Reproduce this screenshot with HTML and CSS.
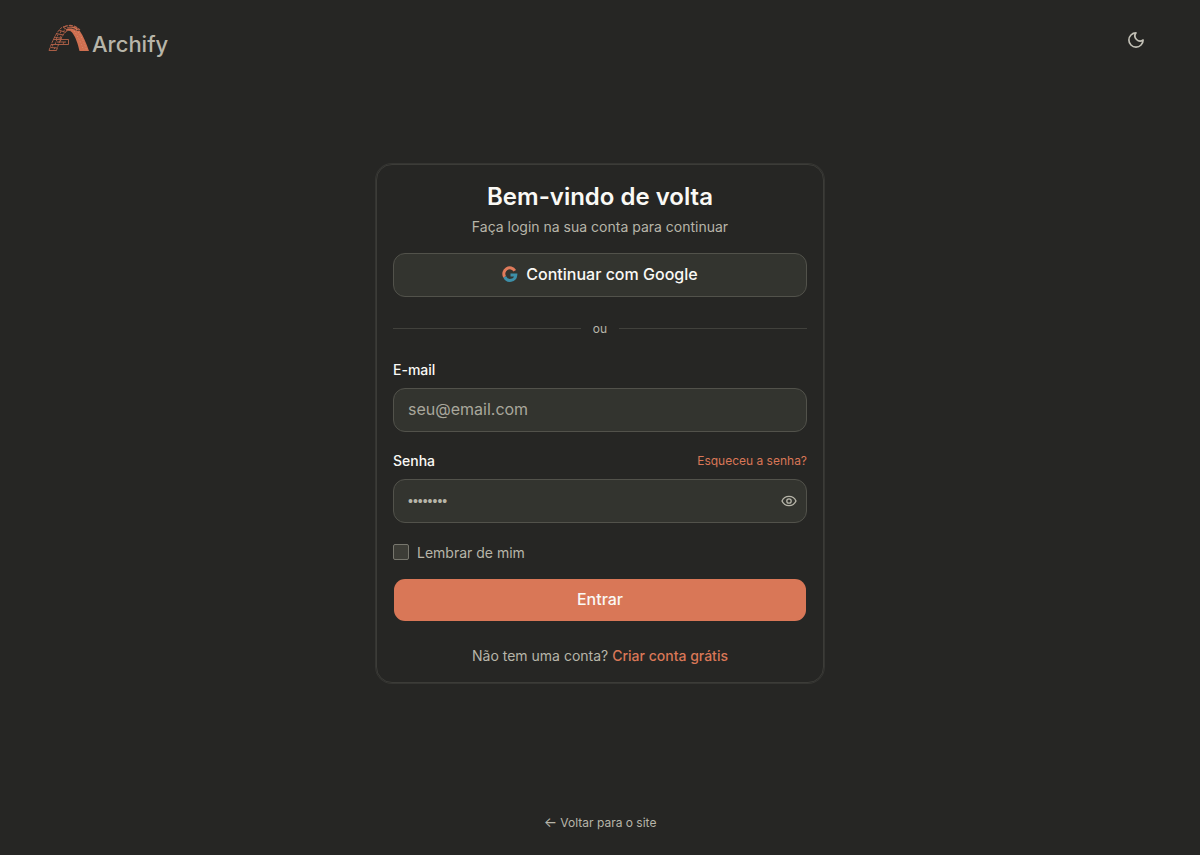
FILE: index.html
```html
<!DOCTYPE html>
<html lang="pt-BR">
<head>
    <meta charset="UTF-8">
    <meta name="viewport" content="width=device-width, initial-scale=1.0">
    <title>Entrar - Archify</title>
    <link rel="stylesheet" href="styles.css">
</head>
<body>
    <header class="topbar">
        <a class="logo" href="#">
            <svg class="logo-mark" viewBox="0 0 42 28" aria-hidden="true">
                <!-- right leg -->
                <path fill="#cf6f50" d="M19 3.500C24 1.500 29 3 31.500 6.500C35.500 12 38.500 20 41 27H31.500C30 20 27.500 13 24.500 9C23 7 21 6 18 7Z"/>
                <path fill="none" stroke="#262624" stroke-width=".8" d="M18 4.500C22 3.500 26 4 28.500 6.500L32 6"/>
                <!-- brick side -->
                <g fill="none" stroke="#b5634a" stroke-width=".9">
                    <path stroke-width="1.200" stroke-dasharray="4 1" d="M16 3C20 .8 25 1 28 3L32 6"/>
                    <path stroke-dasharray="3 1" d="M1 26.500C4 18 7.500 10 12 5C13 4 14.500 3 16 2.500M8.500 26.500C10.500 20 13 13.500 16 9.500C18 7 20.500 6 23 6.500"/>
                    <path d="M5 15.500H20.500V20.500H3M1 26.500H8.500M2.500 23.500L9.500 24M9 18H18M6 13L13.500 14.500M8 9.500L15.500 11M11 6L17.500 8.500M15 3L20 6.500"/>
                    <path stroke-dasharray="2 1" d="M5 20.500L4 23.500M7 23.500L5.500 26.500M9 15.500L7 20.500M13 15.500L12 18M16 18L15 20.500M10 10.500L8 15.500M12 14L13.500 10.500M13 7L12 10.500M15.500 8L17 4.500"/>
                </g>
                <g fill="none" stroke="#df957d" stroke-width=".7" stroke-dasharray="1 2">
                    <path d="M28 6C32 9 36 18 38.500 26M26 7C30 12 33.500 20 35.500 26"/>
                </g>
            </svg>
            <span class="logo-text">Archify</span>
        </a>
        <button class="theme-toggle" type="button" aria-label="Alternar tema">
            <svg viewBox="0 0 24 24" aria-hidden="true"><path d="M12 2.500a6.800 6.800 0 0 0 9.500 9.500A9.500 9.500 0 1 1 12 2.500Z"/></svg>
        </button>
    </header>

    <main class="content">
        <section class="card">
            <h1 class="title">Bem-vindo de volta</h1>
            <p class="subtitle">Faça login na sua conta para continuar</p>

            <button class="btn btn-google" type="button">
                <svg viewBox="0 0 16 16" aria-hidden="true">
                    <path fill="none" stroke="#e07b5b" stroke-width="3" d="M12.800 4.700A5.800 5.800 0 0 0 2.700 10.900"/>
                    <path fill="none" stroke="#3d8fa8" stroke-width="3" d="M2.700 10.900A5.800 5.800 0 0 0 13.800 9H8.500"/>
                </svg>
                Continuar com Google
            </button>

            <div class="divider">ou</div>

            <form class="form">
                <div class="field">
                    <label for="email">E-mail</label>
                    <input class="input" id="email" type="email" placeholder="seu@email.com">
                </div>
                <div class="field">
                    <div class="field-head">
                        <label for="password">Senha</label>
                        <a class="forgot" href="#">Esqueceu a senha?</a>
                    </div>
                    <div class="password">
                        <input class="input" id="password" type="password" placeholder="••••••••">
                        <button class="toggle-password" type="button" aria-label="Mostrar senha">
                            <svg viewBox="0 0 16 16" aria-hidden="true">
                                <path d="M1 8C3.800 1.900 12.200 1.900 15 8C12.200 14.100 3.800 14.100 1 8Z"/>
                                <circle cx="8" cy="8" r="2.200"/>
                            </svg>
                        </button>
                    </div>
                </div>
                <label class="remember"><input type="checkbox"> Lembrar de mim</label>
                <button class="btn btn-primary" type="submit">Entrar</button>
            </form>

            <p class="signup">Não tem uma conta? <a href="#">Criar conta grátis</a></p>
        </section>
    </main>

    <footer class="footer">
        <a href="#"><span class="arrow">←</span> Voltar para o site</a>
    </footer>
</body>
</html>
```
FILE: styles.css
```css
* {
    box-sizing: border-box;
}
body {
    display: flex;
    flex-direction: column;
    min-height: 100vh;
    margin: 0;
    background: #262624;
    color: #faf9f5;
    font-family: Inter, "Liberation Sans", sans-serif;
    font-size: 14px;
    line-height: 20px;
}
h1, p {
    margin: 0;
}
a {
    color: inherit;
    text-decoration: none;
}
button, input {
    font: inherit;
    color: inherit;
}
button {
    cursor: pointer;
}

/* Header */
.topbar {
    display: flex;
    align-items: center;
    justify-content: space-between;
    height: 80px;
    padding: 0 48px;
}
.logo {
    display: flex;
    align-items: flex-start;
    gap: 2px;
    color: #b7b5a9;
}
.logo-mark {
    width: 42px;
    height: 28px;
}
.logo-text {
    padding-top: 8px;
    font-size: 22px;
    font-weight: 500;
    line-height: 24px;
}
.theme-toggle {
    display: flex;
    align-items: center;
    justify-content: center;
    width: 32px;
    height: 32px;
    padding: 0;
    border: 0;
    background: none;
    color: #c2c0b6;
}
.theme-toggle svg {
    width: 18px;
    height: 18px;
    fill: none;
    stroke: currentColor;
    stroke-width: 2.2;
    stroke-linejoin: round;
}

/* Card */
.content {
    flex: 1;
    display: flex;
    align-items: center;
    justify-content: center;
    padding: 0 24px 24px;
}
.card {
    width: 100%;
    max-width: 448px;
    padding: 16px;
    border: 1px solid #3c3c38;
    border-radius: 16px;
    box-shadow: 0 0 0 1px #353532;
}
.title {
    font-size: 24px;
    font-weight: 600;
    line-height: 32px;
    text-align: center;
}
.subtitle {
    margin: 4px 0 16px;
    color: #b7b5a9;
    text-align: center;
}
.btn {
    display: flex;
    align-items: center;
    justify-content: center;
    gap: 8px;
    width: 100%;
    height: 44px;
    padding: 0 14px 2px;
    border: 1px solid #52524b;
    border-radius: 12px;
    background: #33342f;
    font-size: 16px;
    font-weight: 500;
}
.btn-google svg {
    width: 16px;
    height: 16px;
}
.btn-primary {
    border-color: transparent;
    background: #d97757;
    background-clip: padding-box;
}
.divider {
    display: flex;
    align-items: center;
    gap: 12px;
    margin: 24px 0;
    color: #b7b5a9;
    font-size: 12px;
    line-height: 16px;
}
.divider::before,
.divider::after {
    content: "";
    flex: 1;
    height: 1px;
    background: #41413c;
}

/* Form */
.field {
    margin-bottom: 20px;
}
.field label {
    display: block;
    padding-bottom: 1px;
    font-weight: 500;
    line-height: 18px;
}
.field-head {
    display: flex;
    align-items: center;
    justify-content: space-between;
}
.forgot {
    color: #d97757;
    font-size: 12px;
    line-height: 16px;
}
.input {
    display: block;
    width: 100%;
    height: 44px;
    margin-top: 8px;
    padding: 0 14px 2px;
    border: 1px solid #52524b;
    border-radius: 12px;
    background: #33342f;
    font-size: 16px;
}
.input::placeholder {
    color: #a9a79c;
    opacity: 1;
}
.password {
    position: relative;
}
.password .input::placeholder {
    color: #b7b5a9;
    font-family: "Liberation Sans", sans-serif;
    font-size: 14px;
}
.toggle-password {
    position: absolute;
    top: 0;
    right: 0;
    display: flex;
    align-items: center;
    justify-content: center;
    width: 36px;
    height: 44px;
    padding: 0;
    border: 0;
    background: none;
    color: #b7b5a9;
}
.toggle-password svg {
    width: 16px;
    height: 16px;
    fill: none;
    stroke: currentColor;
    stroke-width: 1.3;
}
.remember {
    display: flex;
    align-items: center;
    gap: 8px;
    margin-bottom: 16px;
    color: #b7b5a9;
    line-height: 19px;
}
.remember input {
    appearance: none;
    width: 16px;
    height: 16px;
    margin: 0;
    border: 1px solid #77766d;
    border-radius: 2px;
    background: #3d3d37;
}
.signup {
    margin-top: 24px;
    color: #b7b5a9;
    text-align: center;
}
.signup a {
    color: #d97757;
    font-weight: 500;
}

/* Footer */
.footer {
    padding: 24px;
    color: #b7b5a9;
    font-size: 12px;
    line-height: 16px;
    text-align: center;
}
.arrow {
    font-size: 14px;
}
```
